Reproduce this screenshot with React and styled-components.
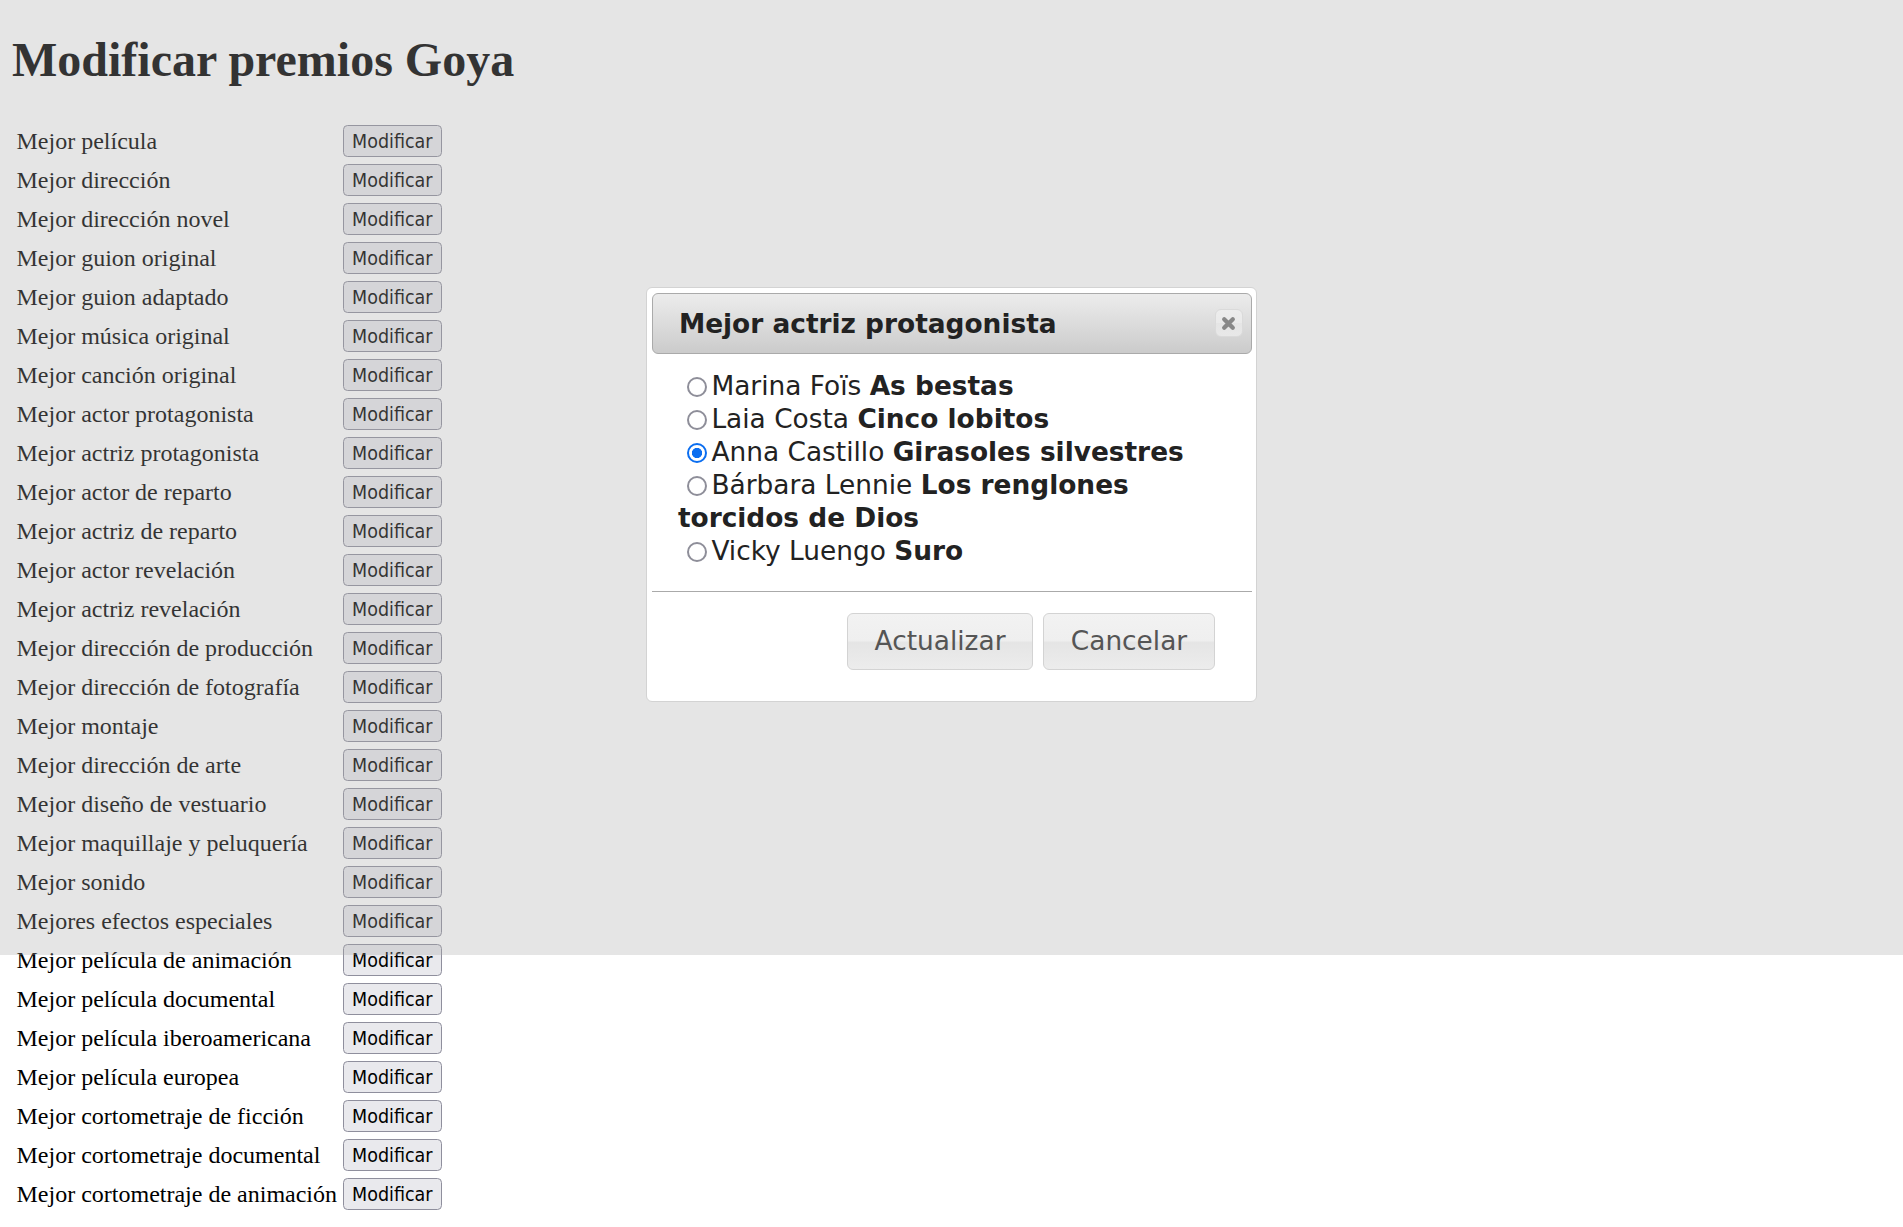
import React from 'react';
import styled, {createGlobalStyle} from 'styled-components';

const GlobalStyle = createGlobalStyle`
    html {
        margin: 0;
        padding: 0;
        background: #fff;
    }

    body {
        margin: 0 12px 12px;
        padding: 0;
        font-family: "Liberation Serif", "Times New Roman", serif;
        color: #000;
        background: #fff;
    }
`;

const Title = styled.h1`
    margin: 32px 0;
    font-size: 48px;
    line-height: 56px;
    font-weight: bold;
`;

const AwardTable = styled.table`
    border-collapse: separate;
    border-spacing: 3px;
`;

const Cell = styled.td`
    padding: 2px 1.5px;
    vertical-align: middle;
    font-size: 24px;
    white-space: nowrap;
`;

const EditButton = styled.button`
    display: block;
    box-sizing: border-box;
    height: 32px;
    margin: 0;
    padding: 0 8px;
    border: 1.5px solid #8f8f9d;
    border-radius: 4.5px;

    font-family: "DejaVu Sans Condensed", "DejaVu Sans", sans-serif;
    font-size: 19.5px;
    color: #000;

    background-color: #e9e9ed;
`;

const Overlay = styled.div`
    position: absolute;
    top: 0;
    left: 0;
    width: 100%;
    height: 955px;

    background: rgba(170, 170, 170, 0.3);
`;

const Dialog = styled.div`
    position: absolute;
    top: 287px;
    left: 646px;
    box-sizing: border-box;
    width: 611px;
    padding: 4.5px;
    border: 1.5px solid #d3d3d3;
    border-radius: 6px;

    font-family: "DejaVu Sans", Verdana, sans-serif;
    font-size: 26.4px;
    color: #222;

    background: #fff;
`;

const TitleBar = styled.div`
    display: flex;
    align-items: center;
    padding: 12.5px 8px 11px 26.4px;
    border: 1.5px solid #aaa;
    border-radius: 6px;

    color: #222;
    font-weight: bold;

    background: linear-gradient(to bottom, #ececec 0%, #dcdcdc 50%, #cbcbcb 100%);
`;

const DialogTitle = styled.span`
    flex: 1 1 auto;
    margin: 2.6px 0;
    line-height: 30.7px;
    white-space: nowrap;
`;

const CloseButton = styled.button`
    display: flex;
    align-items: center;
    justify-content: center;
    flex: 0 0 auto;
    box-sizing: border-box;
    width: 28px;
    height: 28px;
    margin: -1px 0 0;
    padding: 0;
    border: 1.5px solid #dadada;
    border-radius: 6px;

    background: linear-gradient(to bottom, #ededed 0%, #eaeaea 50%, #e5e5e5 50%, #e8e8e8 100%);
`;

const Content = styled.div`
    padding: 15.3px 26.4px 11px;
    line-height: 33px;
`;

const Option = styled.label`
    display: block;
`;

const Radio = styled.input`
    appearance: none;
    display: inline-block;
    box-sizing: border-box;
    width: 20px;
    height: 20px;
    margin: 4.5px 4px 0 9.5px;
    border: 2.4px solid #8e8e99;
    border-radius: 50%;
    vertical-align: -1.5px;

    background: #fff;

    &:checked {
        border-color: #0b6ef0;
        background: radial-gradient(circle, #0b6ef0 0 4.8px, #fff 5.4px);
    }
`;

const ButtonPane = styled.div`
    display: flex;
    justify-content: flex-end;
    margin-top: 13.2px;
    padding: 7.9px 26.4px 14px 6.6px;
    border-top: 1.5px solid #aaa;
`;

const DialogButton = styled.button`
    margin: 13.2px 10.5px 13.2px 0;
    padding: 11.8px 26.4px;
    border: 1.5px solid #d3d3d3;
    border-radius: 6px;

    font-family: "DejaVu Sans", Verdana, sans-serif;
    font-size: 26.4px;
    line-height: 30.7px;
    color: #555;

    background: linear-gradient(to bottom, #f2f2f2 0%, #efefef 48%, #e5e5e5 52%, #ececec 100%);
`;

const awards = [
    'Mejor película',
    'Mejor dirección',
    'Mejor dirección novel',
    'Mejor guion original',
    'Mejor guion adaptado',
    'Mejor música original',
    'Mejor canción original',
    'Mejor actor protagonista',
    'Mejor actriz protagonista',
    'Mejor actor de reparto',
    'Mejor actriz de reparto',
    'Mejor actor revelación',
    'Mejor actriz revelación',
    'Mejor dirección de producción',
    'Mejor dirección de fotografía',
    'Mejor montaje',
    'Mejor dirección de arte',
    'Mejor diseño de vestuario',
    'Mejor maquillaje y peluquería',
    'Mejor sonido',
    'Mejores efectos especiales',
    'Mejor película de animación',
    'Mejor película documental',
    'Mejor película iberoamericana',
    'Mejor película europea',
    'Mejor cortometraje de ficción',
    'Mejor cortometraje documental',
    'Mejor cortometraje de animación'
];

const nominees = [
    {name: 'Marina Foïs', film: 'As bestas'},
    {name: 'Laia Costa', film: 'Cinco lobitos'},
    {name: 'Anna Castillo', film: 'Girasoles silvestres', checked: true},
    {name: 'Bárbara Lennie', film: 'Los renglones torcidos de Dios'},
    {name: 'Vicky Luengo', film: 'Suro'}
];

const CloseIcon = () => (
    <svg width="15" height="15" viewBox="0 0 14 14">
        <path d="M3 3 L11 11 M11 3 L3 11" stroke="#888" strokeWidth="4" strokeLinecap="round" fill="none" />
    </svg>
);

const App = () => (
    <>
        <GlobalStyle />

        <Title>Modificar premios Goya</Title>

        <AwardTable>
            <tbody>
                {awards.map(award => (
                    <tr key={award}>
                        <Cell>{award}</Cell>
                        <Cell>
                            <EditButton>Modificar</EditButton>
                        </Cell>
                    </tr>
                ))}
            </tbody>
        </AwardTable>

        <Overlay />

        <Dialog>
            <TitleBar>
                <DialogTitle>Mejor actriz protagonista</DialogTitle>
                <CloseButton title="Close">
                    <CloseIcon />
                </CloseButton>
            </TitleBar>

            <Content>
                {nominees.map(n => (
                    <Option key={n.name}>
                        <Radio type="radio" name="actriz" defaultChecked={n.checked} />
                        {n.name} <b>{n.film}</b>
                    </Option>
                ))}
            </Content>

            <ButtonPane>
                <DialogButton>Actualizar</DialogButton>
                <DialogButton>Cancelar</DialogButton>
            </ButtonPane>
        </Dialog>
    </>
);

export default App;
